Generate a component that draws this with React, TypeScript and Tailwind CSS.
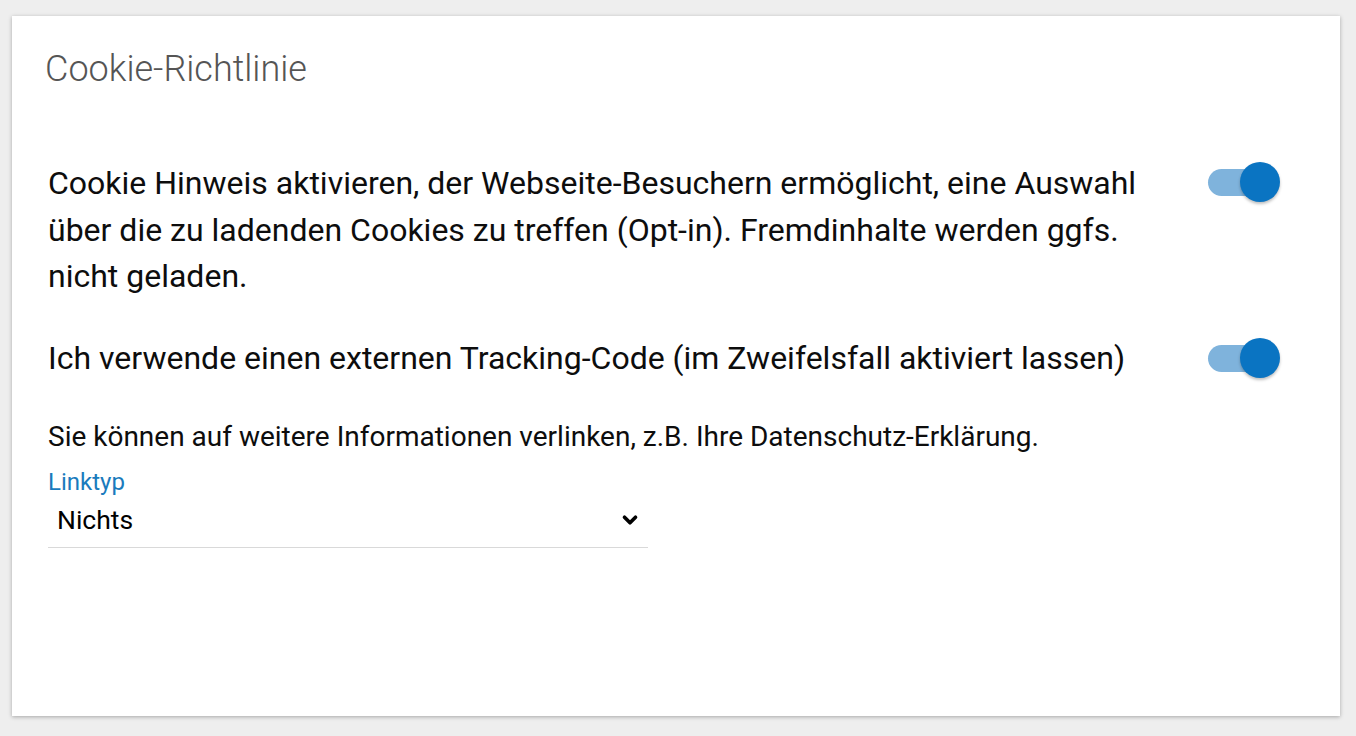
import { ChevronDown } from "lucide-react";

function Toggle() {
  return (
    <div className="relative h-[40px] w-[72px] shrink-0">
      <div className="absolute left-0 top-[7px] h-[27px] w-[60px] rounded-full bg-[#7fb3dc]" />
      <div className="absolute right-0 top-0 h-[40px] w-[40px] rounded-full bg-[#0a74c2] shadow-[0_2px_3px_rgba(0,0,0,0.25)]" />
    </div>
  );
}

export default function App() {
  return (
    <div className="min-h-[736px] bg-[#eeeeee] px-[12px] pt-[16px] pb-[20px] font-['Roboto',sans-serif]">
      <div className="h-[700px] w-[1328px] bg-white shadow-[0_1px_4px_rgba(0,0,0,0.3)]">
        <h2 className="pl-[33px] pt-[31px] text-[36px] font-light leading-[44px] text-[#555]">
          Cookie-Richtlinie
        </h2>

        <div className="mt-[69px] flex items-start justify-between pl-[36px] pr-[60px]">
          <p className="w-[1120px] text-[32px] leading-[46.5px] text-[#0d0d0d]">
            Cookie Hinweis aktivieren, der Webseite-Besuchern ermöglicht, eine Auswahl über die zu
            ladenden Cookies zu treffen (Opt-in). Fremdinhalte werden ggfs. nicht geladen.
          </p>
          <div className="pt-[2px]">
            <Toggle />
          </div>
        </div>

        <div className="mt-[35px] flex items-center justify-between pl-[36px] pr-[60px]">
          <p className="text-[32px] leading-[46px] text-[#0d0d0d]">
            Ich verwende einen externen Tracking-Code (im Zweifelsfall aktiviert lassen)
          </p>
          <Toggle />
        </div>

        <p className="mt-[39px] pl-[36px] text-[28px] leading-[34px] text-[#0d0d0d]">
          Sie können auf weitere Informationen verlinken, z.B. Ihre Datenschutz-Erklärung.
        </p>

        <div className="ml-[36px] mt-[15px] w-[600px]">
          <div className="text-[24px] leading-[26px] text-[#1a7bbd]">Linktyp</div>
          <div className="flex items-center justify-between border-b border-[#d9d9d9] pl-[9px] pr-[7px] pb-[11px] pt-[9px]">
            <span className="text-[26.5px] leading-[32px] text-black">Nichts</span>
            <ChevronDown className="h-[22px] w-[22px] text-black" strokeWidth={4} />
          </div>
        </div>
      </div>
    </div>
  );
}
